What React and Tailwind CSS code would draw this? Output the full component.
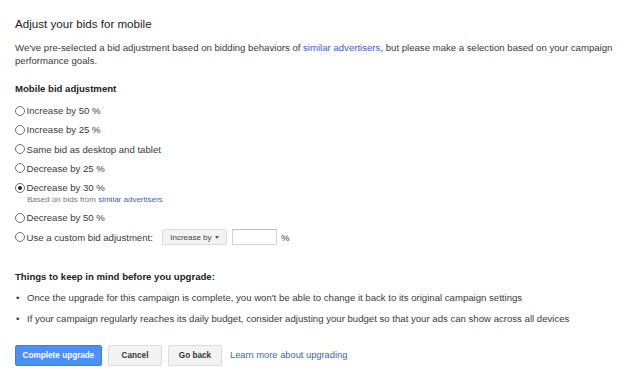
import React, { useState } from "react";

const options = [
  { id: "inc50", label: "Increase by 50 %" },
  { id: "inc25", label: "Increase by 25 %" },
  { id: "same", label: "Same bid as desktop and tablet" },
  { id: "dec25", label: "Decrease by 25 %" },
  { id: "dec30", label: "Decrease by 30 %", note: true },
  { id: "dec50", label: "Decrease by 50 %" },
];

function Radio({ checked }) {
  return (
    <span className="w-[10px] h-[10px] rounded-full border border-[#707070] bg-white flex items-center justify-center shrink-0">
      {checked && <span className="w-[4px] h-[4px] rounded-full bg-[#222]" />}
    </span>
  );
}

export default function App() {
  const [sel, setSel] = useState("dec30");

  return (
    <div className="w-[630px] h-[391px] bg-white text-[#3a3a3a] text-[9.6px] leading-[13px] font-['Liberation_Sans',Arial,sans-serif] px-[15px] pt-[16px]">
      <h1 className="text-[11.6px] leading-[16px] text-[#222] mb-[9px]">Adjust your bids for mobile</h1>

      {/* Intro */}
      <p className="w-[600px] mb-[15px]">
        We've pre-selected a bid adjustment based on bidding behaviors of{" "}
        <a className="text-[#3c61cc]">similar advertisers</a>, but please make a selection based on your campaign
        performance goals.
      </p>

      <h2 className="font-bold text-[#222] mb-[9px]">Mobile bid adjustment</h2>

      {/* Options */}
      <div className="flex flex-col gap-[6.25px]">
        {options.map((o) => (
          <div key={o.id} onClick={() => setSel(o.id)} className="flex flex-col">
            <div className="flex items-center gap-[1.5px] h-[13px]">
              <Radio checked={sel === o.id} />
              <span>{o.label}</span>
            </div>
            {o.note && (
              <div className="pl-[12px] text-[8px] leading-[11px] text-[#777]">
                Based on bids from <a className="text-[#3c61cc]">similar advertisers</a>
              </div>
            )}
          </div>
        ))}
        <div className="flex items-center h-[17px] -mt-[2px]">
          <div onClick={() => setSel("custom")} className="flex items-center gap-[1.5px]">
            <Radio checked={sel === "custom"} />
            <span>Use a custom bid adjustment:</span>
          </div>
          <button className="ml-[9px] h-[16px] w-[65px] border border-[#dcdcdc] bg-[#f3f3f3] text-[#444] text-[8px] flex items-center justify-center gap-[3px] rounded-[2px]">
            Increase by
            <span className="w-0 h-0 border-l-[2.5px] border-r-[2.5px] border-t-[3px] border-l-transparent border-r-transparent border-t-[#555]" />
          </button>
          <input className="ml-[5px] w-[45px] h-[16px] border border-[#d4d4d4] border-t-[#bdbdbd] outline-none" />
          <span className="ml-[4px]">%</span>
        </div>
      </div>

      {/* Notes */}
      <h2 className="font-bold text-[#222] mt-[24px] mb-[8px]">Things to keep in mind before you upgrade:</h2>
      <ul className="flex flex-col gap-[8px]">
        <li className="flex">
          <span className="w-[12px] pl-[1px]">•</span>
          Once the upgrade for this campaign is complete, you won't be able to change it back to its original campaign settings
        </li>
        <li className="flex">
          <span className="w-[12px] pl-[1px]">•</span>
          If your campaign regularly reaches its daily budget, consider adjusting your budget so that your ads can show across all devices
        </li>
      </ul>

      {/* Actions */}
      <div className="flex items-center mt-[20px]">
        <button className="h-[21px] w-[87px] rounded-[2px] bg-[#4d8ff5] border border-[#3f7eea] text-white font-bold text-[8.2px]">
          Complete upgrade
        </button>
        <button className="ml-[6px] h-[21px] w-[54px] rounded-[2px] bg-[#f3f3f3] border border-[#dcdcdc] text-[#333] font-bold text-[8.2px]">
          Cancel
        </button>
        <button className="ml-[6px] h-[21px] w-[54px] rounded-[2px] bg-[#f3f3f3] border border-[#dcdcdc] text-[#333] font-bold text-[8.2px]">
          Go back
        </button>
        <a className="ml-[8px] text-[#3c61cc] text-[9.3px]">Learn more about upgrading</a>
      </div>
    </div>
  );
}
